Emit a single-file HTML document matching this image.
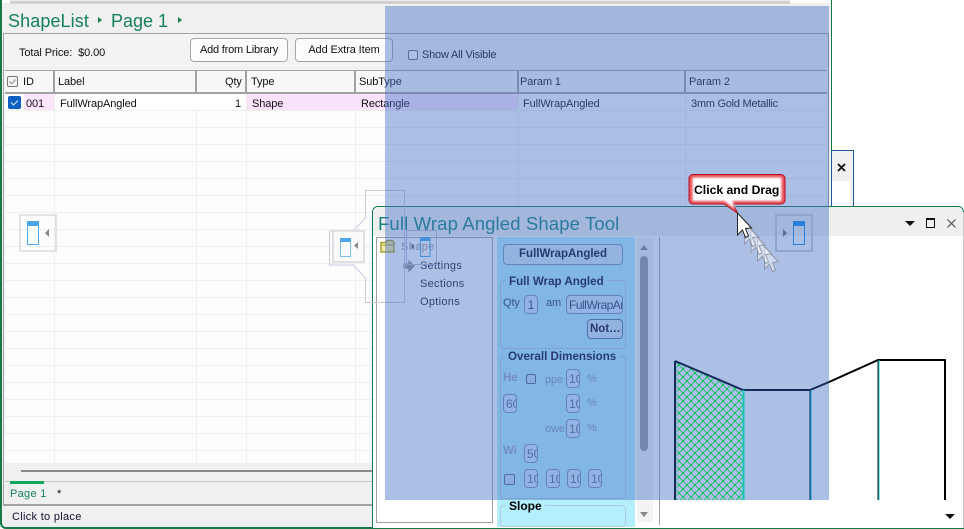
<!DOCTYPE html>
<html><head><meta charset="utf-8"><style>
html,body{margin:0;padding:0;width:964px;height:529px;overflow:hidden;background:#fff;font-family:"Liberation Sans",sans-serif;font-size:11px;color:#111}
div,span{position:absolute;box-sizing:border-box}
.t{white-space:nowrap;line-height:14px;letter-spacing:-.1px}
.v{width:1px;background:#efefef;top:94px;height:369px}
.h{background:#a2a2a2}
.b{font-weight:bold;font-size:11.5px;color:#0c0c28}
.in{border:1px solid #7f91b0;background:#cfe9fb;border-radius:4px;height:19px;width:14px;overflow:hidden;text-align:left;padding:2px 0 0 2px;font-size:12px;line-height:14px;color:#5a6a8a}
.g{color:#8a93ad}
.cb{border:1px solid #55657e;border-radius:2px;background:#c4dff7}
.grp{border:1px solid #b4c9d8;border-radius:4px}
.lg{background:#b3effe;padding:0 3px;line-height:13px;white-space:nowrap;font-weight:bold;font-size:11.6px;color:#0c0c28}
</style></head><body>

<!-- main window -->
<div style="left:0;top:0;width:832px;height:529px;background:#f0f0f0;border:2px solid #137a48;border-top:0;border-bottom-left-radius:6px;border-right-width:1px"></div>
<div style="left:2px;top:0;width:829px;height:3px;background:#fff"></div>
<div style="left:10px;top:0;width:780px;height:4px;background:linear-gradient(#f0f0f0,#c4c4c4 70%,#e8e8e8)"></div>
<div style="left:790px;top:3px;width:41px;height:30px;background:#f0f0f0"></div>
<div class="t" style="left:8px;top:10px;font-size:18px;line-height:22px;color:#14805a;letter-spacing:.1px">ShapeList</div>
<div style="left:98px;top:17px;border-left:4px solid #128048;border-top:3px solid transparent;border-bottom:3px solid transparent"></div>
<div class="t" style="left:111px;top:10px;font-size:18px;line-height:22px;color:#14805a;letter-spacing:0">Page 1</div>
<div style="left:178px;top:17px;border-left:4px solid #128048;border-top:3px solid transparent;border-bottom:3px solid transparent"></div>

<div style="left:3px;top:33px;width:826px;height:473px;border:1px solid #a2a2a2;border-bottom:2px solid #a2a2a2;background:#f3f3f3"></div>
<div class="t" style="left:19px;top:46px">Total Price:&nbsp; $0.00</div>
<div class="t" style="left:190px;top:38px;width:98px;height:24px;background:#fdfdfd;border:1px solid #a5a5a5;border-radius:4px;text-align:center;line-height:23px;letter-spacing:-.2px">Add from Library</div>
<div class="t" style="left:295px;top:38px;width:98px;height:24px;background:#fdfdfd;border:1px solid #a5a5a5;border-radius:4px;text-align:center;line-height:23px">Add Extra Item</div>
<div style="left:408px;top:50px;width:10px;height:10px;border:1px solid #666;border-radius:2px;background:#fff"></div>
<div class="t" style="left:422px;top:48px;letter-spacing:-.2px">Show All Visible</div>

<!-- grid -->
<div style="left:5px;top:70px;width:822px;height:24px;background:#f8f8f8;border-top:1px solid #a2a2a2;border-bottom:2px solid #a2a2a2"></div>
<div style="left:5px;top:94px;width:822px;height:369px;background:#fdfdfd;background-image:repeating-linear-gradient(to bottom,transparent 0,transparent 16px,#efefef 16px,#efefef 17px)"></div>
<div class="v" style="left:54px"></div><div class="v" style="left:196px"></div><div class="v" style="left:246px"></div><div class="v" style="left:355px"></div><div class="v" style="left:518px"></div><div class="v" style="left:685px"></div>
<div class="h" style="left:53px;top:71px;width:2px;height:22px"></div>
<div class="h" style="left:195px;top:71px;width:2px;height:22px"></div>
<div class="h" style="left:245px;top:71px;width:2px;height:22px"></div>
<div class="h" style="left:354px;top:71px;width:2px;height:22px"></div>
<div class="h" style="left:517px;top:71px;width:2px;height:22px"></div>
<div class="h" style="left:684px;top:71px;width:2px;height:22px"></div>
<div style="left:7px;top:76px;width:11px;height:11px;border:1px solid #777;border-radius:2px;background:#f4f4f4"></div>
<svg style="position:absolute;left:7px;top:76px" width="11" height="11"><path d="M2.5 5.500L4.800 7.800L8.500 3.500" fill="none" stroke="#888" stroke-width="1"/></svg>
<div class="t" style="left:23px;top:75px">ID</div>
<div class="t" style="left:58px;top:75px">Label</div>
<div class="t" style="left:225px;top:75px">Qty</div>
<div class="t" style="left:251px;top:75px">Type</div>
<div class="t" style="left:359px;top:75px">SubType</div>
<div class="t" style="left:520px;top:75px">Param 1</div>
<div class="t" style="left:689px;top:75px">Param 2</div>
<div style="left:24px;top:94px;width:30px;height:16px;background:#fce6fc"></div>
<div style="left:55px;top:94px;width:190px;height:16px;background:#fff"></div>
<div style="left:247px;top:94px;width:271px;height:16px;background:#fbe3fb"></div>
<div style="left:8px;top:96px;width:13px;height:13px;background:#0d60c0;border-radius:2px"></div>
<svg style="position:absolute;left:8px;top:96px" width="13" height="13"><path d="M3 6.500L5.500 9L10 4.500" fill="none" stroke="#d8e8fa" stroke-width="1.100"/></svg>
<div class="t" style="left:26px;top:97px">001</div>
<div class="t" style="left:60px;top:97px">FullWrapAngled</div>
<div class="t" style="left:235px;top:97px">1</div>
<div class="t" style="left:252px;top:97px">Shape</div>
<div class="t" style="left:361px;top:97px">Rectangle</div>
<div class="t" style="left:523px;top:97px">FullWrapAngled</div>
<div class="t" style="left:691px;top:97px;letter-spacing:-.25px">3mm Gold Metallic</div>

<!-- bottom of main -->
<div style="left:4px;top:463px;width:824px;height:41px;background:#f0f0f0"></div>
<div style="left:21px;top:470px;width:352px;height:2px;background:#8a8a8a"></div>
<div style="left:5px;top:481px;width:368px;height:1px;background:#c8c8c8"></div>
<div style="left:10px;top:481px;width:34px;height:3px;background:#0fa85c"></div>
<div class="t" style="left:10px;top:487px;color:#14805a;letter-spacing:.3px">Page 1</div>
<div class="t" style="left:57px;top:487px">*</div>
<div class="t" style="left:12px;top:510px;letter-spacing:.3px;color:#101030">Click to place</div>

<!-- left dock hint -->
<div style="left:19px;top:214px;width:38px;height:38px;border:2px solid #e3e3e3"></div>
<div style="left:27px;top:221px;width:12px;height:24px;border:1px solid #4ca6ea;background:#fff"></div>
<div style="left:27px;top:221px;width:12px;height:5px;background:#4ca6ea"></div>
<div style="left:45px;top:229px;border-right:4px solid #888;border-top:4px solid transparent;border-bottom:4px solid transparent"></div>

<!-- right window behind -->
<div style="left:831px;top:150px;width:23px;height:60px;background:#f0f0f0;border:1px solid #1e5a9a;border-bottom:0"></div>
<div style="left:832px;top:181px;width:18px;height:30px;background:#fff"></div>
<svg style="position:absolute;left:837px;top:163px" width="9" height="9"><path d="M1 1L8 8M8 1L1 8" stroke="#111" stroke-width="1.800"/></svg>

<!-- floating tool window -->
<div style="left:372px;top:206px;width:592px;height:323px;background:#fff;border:1px solid #137a48;border-radius:6px 6px 0 0"></div>
<div style="left:373px;top:207px;width:590px;height:29px;background:#efefef;border-radius:5px 5px 0 0"></div>
<div style="left:372px;top:528px;width:590px;height:1px;background:#137a48"></div>
<div style="left:963px;top:212px;width:1px;height:316px;background:#c8c8c8"></div>
<div class="t" style="left:378px;top:213px;font-size:18.500px;line-height:22px;color:#14807a;letter-spacing:.13px">Full Wrap Angled Shape Tool</div>
<div style="left:905px;top:221px;border-top:5px solid #111;border-left:5px solid transparent;border-right:5px solid transparent"></div>
<div style="left:926px;top:218px;width:9px;height:10px;border:1px solid #111;border-top-width:2px"></div>
<svg style="position:absolute;left:947px;top:219px" width="9" height="9"><path d="M.5.5L8.500 8.500M8.500.5L.5 8.500" stroke="#444" stroke-width="1"/></svg>

<div style="left:376px;top:237px;width:117px;height:286px;border:1px solid #a0a0a0;background:#fff"></div>
<svg style="position:absolute;left:380px;top:239px" width="16" height="15"><path d="M1 3.500h4.500l1.500-2h5.500l1.500 2V13H1z" fill="#f4eca8" stroke="#a8a030" stroke-width="1.500"/><path d="M1.500 6h13" stroke="#a8a030"/></svg>
<div class="t" style="left:401px;top:240px;color:#8a8a8a;letter-spacing:.4px">Shape</div>
<svg style="position:absolute;left:403px;top:260px" width="12" height="12"><path d="M1 4h5V1l5 5-5 5V8H1z" fill="#999" stroke="#777"/></svg>
<div class="t" style="left:420px;top:259px;color:#1a1a2a;letter-spacing:.3px">Settings</div>
<div class="t" style="left:420px;top:277px;color:#1a1a2a;letter-spacing:.3px">Sections</div>
<div class="t" style="left:420px;top:295px;color:#1a1a2a;letter-spacing:.3px">Options</div>

<!-- center property panel -->
<div style="left:497px;top:237px;width:138px;height:290px;background:#b3effe"></div>
<div class="b" style="left:503px;top:244px;width:120px;height:21px;border:1px solid #7f93b0;border-radius:4px;background:#cfe6f5;text-align:center;line-height:19px;font-size:11.500px">FullWrapAngled</div>
<div class="grp" style="left:500px;top:280px;width:126px;height:69px"></div>
<div class="lg" style="left:506px;top:275px">Full Wrap Angled</div>
<div class="t" style="left:503px;top:296px;color:#2c3a58">Qty</div>
<div class="in" style="left:524px;top:295px;text-align:center;padding:2px 0 0;color:#2c3a68">1</div>
<div class="t" style="left:546px;top:296px;color:#2c3a58">am</div>
<div class="in" style="left:566px;top:295px;width:57px;color:#2c3a58;letter-spacing:-.5px">FullWrapAr</div>
<div class="b" style="left:587px;top:319px;width:36px;height:20px;border:1px solid #5a6f92;border-radius:4px;background:#cfe6f5;line-height:18px;padding-left:2px;white-space:nowrap">Not…</div>
<div class="grp" style="left:500px;top:356px;width:126px;height:143px"></div>
<div class="lg" style="left:505px;top:350px">Overall Dimensions</div>
<div class="b g" style="left:503px;top:372px;color:#97a3bb">He</div>
<div class="cb" style="left:526px;top:374px;width:10px;height:10px"></div>
<div class="t g" style="left:545px;top:373px">ppe</div>
<div class="in" style="left:566px;top:369px">10</div><div class="t g" style="left:587px;top:372px">%</div>
<div class="in" style="left:503px;top:394px">60</div>
<div class="in" style="left:566px;top:394px">10</div><div class="t g" style="left:587px;top:396px">%</div>
<div class="t g" style="left:545px;top:422px">owe</div>
<div class="in" style="left:566px;top:419px">10</div><div class="t g" style="left:587px;top:421px">%</div>
<div class="b g" style="left:503px;top:445px;color:#97a3bb">Wi</div>
<div class="in" style="left:524px;top:444px">50</div>
<div class="cb" style="left:504px;top:474px;width:11px;height:11px"></div>
<div class="in" style="left:524px;top:469px">10</div>
<div class="in" style="left:546px;top:469px">10</div>
<div class="in" style="left:567px;top:469px">10</div>
<div class="in" style="left:588px;top:469px">10</div>
<div class="grp" style="left:500px;top:505px;width:126px;height:22px"></div>
<div class="lg" style="left:506px;top:500px;color:#000;font-size:12px">Slope</div>

<!-- scrollbar -->
<div style="left:637px;top:238px;width:16px;height:284px;background:#f3f3f3"></div>
<div style="left:640px;top:256px;width:8px;height:195px;background:#9a9a9a;border-radius:4px"></div>
<div style="left:640px;top:245px;border-bottom:5px solid #888;border-left:4px solid transparent;border-right:4px solid transparent"></div>
<div style="left:640px;top:512px;border-top:5px solid #888;border-left:4px solid transparent;border-right:4px solid transparent"></div>
<div style="left:659px;top:237px;width:1px;height:288px;background:#a0a0a0"></div>
<div style="left:945px;top:514px;border-top:5px solid #111;border-left:5px solid transparent;border-right:5px solid transparent"></div>

<!-- center dock cross -->
<svg style="position:absolute;left:325px;top:185px" width="120" height="125">
<path d="M40.500 5.500H79.500V117.500H40.500V93L28 80H4.500V46H28L40.500 33z" fill="none" stroke="#c9cbe0" stroke-width="1"/>
<rect x="8" y="46" width="31" height="31" fill="#fafafa" stroke="#e0e0e0" stroke-width="2"/>
<rect x="15.500" y="53.500" width="10" height="18" fill="#fff" stroke="#7cc0f0"/>
<rect x="15" y="53" width="11" height="4" fill="#4ca6ea"/>
<path d="M33 57v7l-4-3.500z" fill="#888"/>
<rect x="81.500" y="45.500" width="30" height="34" fill="#fff" fill-opacity=".15" stroke="#b8bcd0" stroke-width="1"/>
<rect x="95.500" y="52.500" width="9.500" height="19" fill="none" stroke="#4ca6ea"/>
<rect x="95" y="52" width="10.500" height="4" fill="#4ca6ea"/>
<path d="M86.500 58.500v6l3-3z" fill="#667"/>
</svg>

<!-- translucent drop overlay -->
<div style="left:385px;top:6px;width:444px;height:494px;background:rgba(72,115,200,.45)"></div>

<!-- drawing -->
<svg style="position:absolute;left:660px;top:340px" width="304" height="160">
<defs><pattern id="x" x="15" y="21" width="8" height="8" patternUnits="userSpaceOnUse"><path d="M0 0L8 8M8 0L0 8" stroke="#18b878" stroke-width=".8"/><rect x="3" y="3" width="2" height="2" fill="#10c850"/><rect x="-1" y="-1" width="2" height="2" fill="#10c850"/><rect x="7" y="7" width="2" height="2" fill="#10c850"/><rect x="7" y="-1" width="2" height="2" fill="#10c850"/><rect x="-1" y="7" width="2" height="2" fill="#10c850"/></pattern></defs>
<path d="M15 21L83 50V160H15z" fill="url(#x)"/>
<path d="M15 160V21" stroke="#142a5a" stroke-width="2"/>
<path d="M15 21L83 50H150L169 42" fill="none" stroke="#142a5a" stroke-width="2"/>
<path d="M169 42L218 20H285V160" fill="none" stroke="#000" stroke-width="2"/>
<path d="M83.500 50V160" stroke="#10c8b0" stroke-width="2"/>
<path d="M150 50V160" stroke="#142a5a" stroke-width="1"/><path d="M151 50V160" stroke="#10a8d8" stroke-width="1"/>
<path d="M218 20V160" stroke="#111" stroke-width="1"/><path d="M219 20V160" stroke="#10d0d8" stroke-width="1"/>
</svg>

<!-- right dock hint on overlay -->
<div style="left:775px;top:214px;width:38px;height:38px;border:2px solid #90a4cf"></div>
<div style="left:793px;top:221px;width:12px;height:24px;border:1px solid #2a7fdc"></div>
<div style="left:793px;top:221px;width:12px;height:5px;background:#2a7fdc"></div>
<div style="left:783px;top:229px;border-left:4px solid #5a6c9c;border-top:4px solid transparent;border-bottom:4px solid transparent"></div>

<!-- callout -->
<svg style="position:absolute;left:685px;top:172px" width="105" height="46">
<defs><filter id="bl" x="-10%" y="-20%" width="120%" height="140%"><feGaussianBlur stdDeviation="1"/></filter></defs>
<path d="M8 2.500H96a4 4 0 0 1 4 4V28a4 4 0 0 1-4 4H48L52.500 41L39 32H8a4 4 0 0 1-4-4V6.500a4 4 0 0 1 4-4z" fill="#e8505a" stroke="#b81020" stroke-width="1"/>
<path d="M7.500 5.500H96.500V29H47.500L50 37L39.500 29H7.500z" fill="#fff" filter="url(#bl)"/>
<text x="9" y="22" font-family="Liberation Sans" font-size="12.200" font-weight="bold" fill="#000">Click and Drag</text>
</svg>

<!-- cursor with trail -->
<svg style="position:absolute;left:730px;top:208px" width="60" height="70">
<defs><path id="ar" d="M0 0L14 15 8 15.500 11 23 8 24.500 5 17 0 22z"/></defs>
<g fill="#fff" fill-opacity=".45" stroke="#7e8494" stroke-opacity=".75" stroke-width="1">
<use href="#ar" x="34.500" y="39"/>
<use href="#ar" x="27.500" y="31"/>
<use href="#ar" x="21" y="22"/>
<use href="#ar" x="14.500" y="14"/>
</g>
<use href="#ar" x="7.500" y="5" fill="#fff" stroke="#222" stroke-width="1"/>
</svg>

</body></html>
